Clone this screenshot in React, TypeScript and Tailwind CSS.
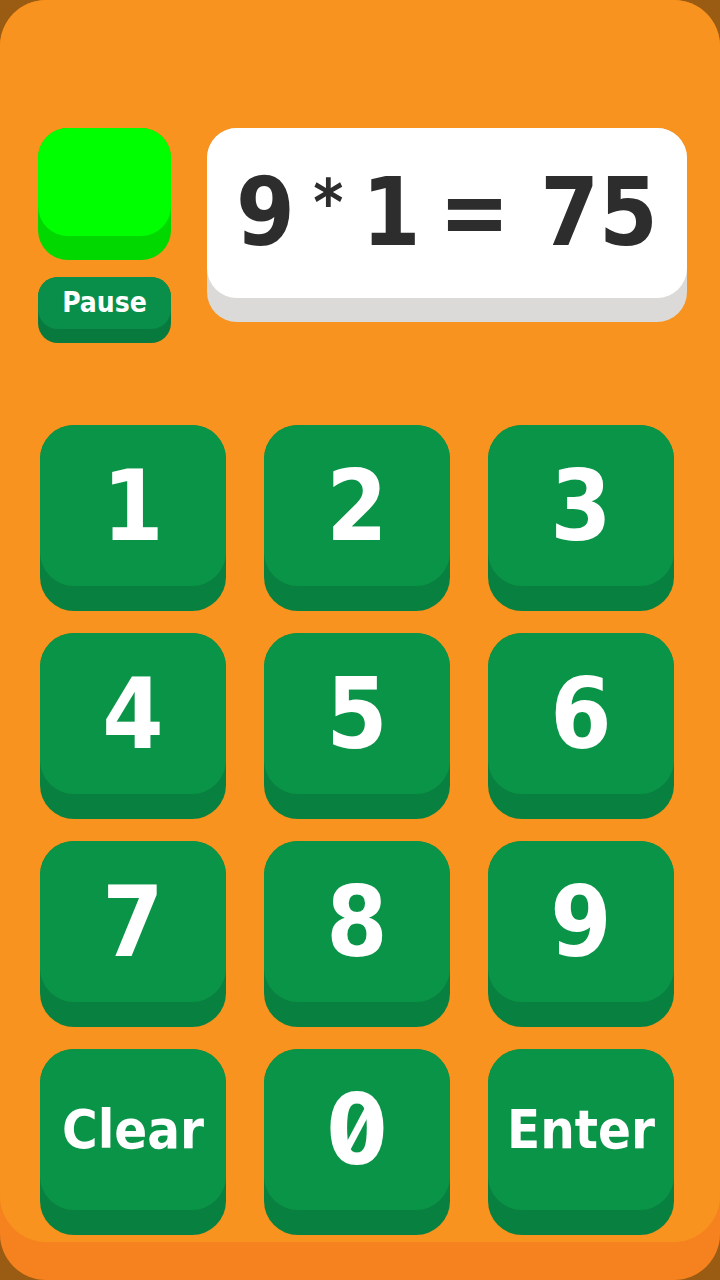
import React from 'react';

const keys = ['1', '2', '3', '4', '5', '6', '7', '8', '9', 'Clear', '0', 'Enter'];

const Key = ({ label }: { label: string }) => {
    const isWord = label.length > 1;
    return (
        <div className="h-[186px] rounded-[34px] bg-[#08803f]">
            <div className="flex h-[161px] items-center justify-center rounded-[34px] bg-[#0a9447]">
                {label === '0' ? (
                    <span className="relative text-[98px] font-bold leading-none text-white">
                        0
                        {/* slash through the zero */}
                        <span className="absolute left-1/2 top-1/2 h-[46px] w-[7px] -translate-x-1/2 -translate-y-1/2 rotate-[28deg] bg-white"></span>
                    </span>
                ) : (
                    <span
                        className={
                            isWord
                                ? 'text-[54px] font-bold leading-none text-white'
                                : 'text-[98px] font-bold leading-none text-white'
                        }
                    >
                        {label}
                    </span>
                )}
            </div>
        </div>
    );
};

export default function App() {
    return (
        <div
            className="h-[1280px] w-[720px] overflow-hidden bg-[#9a5c12]"
            style={{ fontFamily: '"DejaVu Sans Condensed", "DejaVu Sans", sans-serif' }}
        >
            {/* base of the board */}
            <div className="h-full rounded-[46px] bg-[#f5821f]">
                <div className="h-[1242px] rounded-[46px] bg-[#f7931e] pt-[128px]">
                    {/* Top row: status light, pause, equation */}
                    <div className="flex pl-[38px] pr-[33px]">
                        <div className="flex w-[133px] flex-col gap-[17px]">
                            <div className="h-[132px] rounded-[30px] bg-[#00d800]">
                                <div className="h-[108px] rounded-[30px] bg-[#00ff00]"></div>
                            </div>
                            <div className="h-[66px] rounded-[20px] bg-[#087a3e]">
                                <div className="flex h-[52px] items-center justify-center rounded-[20px] bg-[#0a8f4a]">
                                    <span className="text-[28px] font-bold leading-none text-white">Pause</span>
                                </div>
                            </div>
                        </div>
                        <div className="ml-[36px] h-[194px] flex-1 rounded-[30px] bg-[#dcdad8]">
                            <div className="flex h-[170px] items-center justify-center rounded-[30px] bg-white">
                                <div className="flex w-[422px] items-center justify-between text-[94px] font-bold leading-none text-[#2d2d2d]">
                                    <span>9</span>
                                    <span className="-mt-[20px] text-[64px]">*</span>
                                    <span>1</span>
                                    <span>=</span>
                                    <span className="ml-[12px]">75</span>
                                </div>
                            </div>
                        </div>
                    </div>

                    {/* Keypad */}
                    <div className="mt-[82px] grid grid-cols-3 gap-x-[38px] gap-y-[22px] pl-[40px] pr-[46px]">
                        {keys.map((k) => (
                            <Key key={k} label={k} />
                        ))}
                    </div>
                </div>
            </div>
        </div>
    );
}
